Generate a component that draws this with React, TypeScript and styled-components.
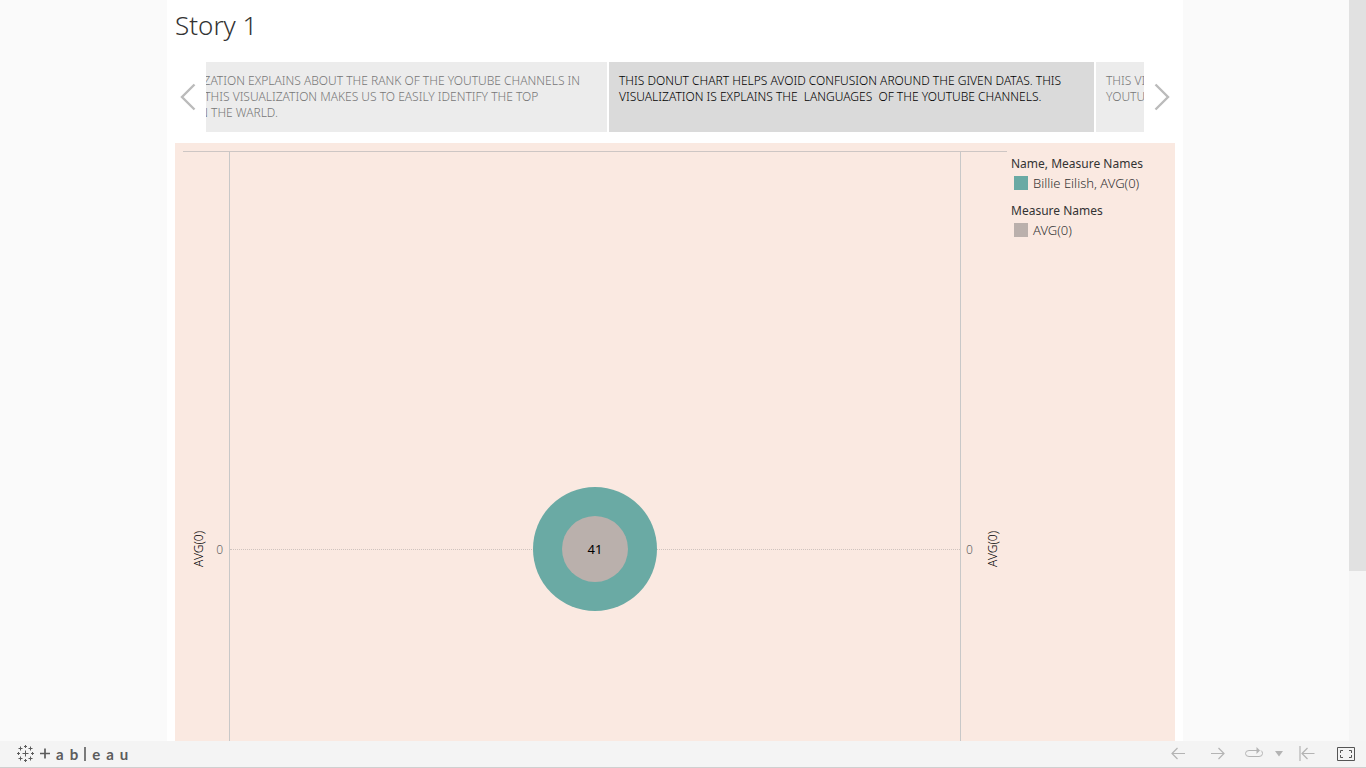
import React from 'react';
import styled, { createGlobalStyle } from 'styled-components';

const GlobalStyle = createGlobalStyle`
  * { box-sizing: border-box; }
  body {
    margin: 0;
    background: #fafafa;
    color: #333;
    font-family: "Noto Sans", "Open Sans", sans-serif;
    font-size: 12px;
  }
  button {
    margin: 0;
    padding: 0;
    border: 0;
    background: none;
    font: inherit;
    color: inherit;
    cursor: pointer;
  }
`;

const Page = styled.div`
  display: flex;
  flex-direction: column;
  height: 100vh;
`;

const Viewport = styled.div`
  display: flex;
  flex: 1;
  min-height: 0;
`;

const Stage = styled.main`
  flex: 1;
  min-width: 0;
  padding-left: 1px;
  overflow: hidden;
`;

const ScrollTrack = styled.div`
  width: 17px;
  background: #f5f5f5;
`;

const ScrollThumb = styled.div`
  height: 77%;
  background: #e1e1e1;
`;

const Story = styled.section`
  max-width: 1016px;
  margin: 0 auto;
  padding: 7px 8px 8px;
  background: #fff;
`;

const Title = styled.h1`
  margin: 0 0 19px;
  font-size: 26px;
  font-weight: 300;
  line-height: 36px;
`;

const Navigator = styled.nav`
  display: flex;
  height: 70px;
  margin-bottom: 11px;
`;

const NavArrow = styled.button<{ $side: 'left' | 'right' }>`
  display: flex;
  flex: none;
  align-items: center;
  justify-content: ${(p) => (p.$side === 'left' ? 'flex-start' : 'flex-end')};
  width: 31px;
  padding: 0 5px;
  color: #bbb;
`;

const PointWindow = styled.div`
  flex: 1;
  min-width: 0;
  overflow: hidden;
`;

const PointStrip = styled.div`
  display: flex;
  gap: 2px;
  height: 100%;
  margin-left: -84px;
`;

const StoryPoint = styled.button<{ $active?: boolean }>`
  display: flex;
  flex: none;
  align-items: flex-start;
  width: 485px;
  padding: 11px 10px;
  background: ${(p) => (p.$active ? '#dadada' : '#ececec')};
  color: ${(p) => (p.$active ? '#000' : '#777')};
  font-weight: 350;
  line-height: 16px;
  text-align: left;
  white-space: pre;
`;

const Dashboard = styled.div`
  display: flex;
  gap: 4px;
  padding: 8px;
  background: #fae9e1;
`;

const Chart = styled.figure`
  display: flex;
  flex: 1;
  height: 795px;
  margin: 0;
  border-top: 1px solid #cdc6c4;
`;

const Axis = styled.div<{ $side: 'left' | 'right' }>`
  display: flex;
  flex-direction: ${(p) => (p.$side === 'left' ? 'row' : 'row-reverse')};
  align-items: center;
  justify-content: space-between;
  width: 46px;
  padding: ${(p) => (p.$side === 'left' ? '0 6px 0 8px' : '0 6px 0 5px')};
`;

const AxisTitle = styled.span`
  color: #000;
  font-weight: 350;
  line-height: 16px;
  writing-mode: vertical-rl;
  rotate: 180deg;
`;

const AxisTick = styled.span`
  color: #666;
  font-weight: 300;
`;

const Plot = styled.div`
  display: grid;
  flex: 1;
  align-items: center;
  justify-items: center;
  border: solid #c8c8c8;
  border-width: 0 1px;

  > * { grid-area: 1 / 1; }
`;

const ZeroLine = styled.div`
  width: 100%;
  border-top: 1px dotted #cfc3be;
`;

const Donut = styled.div`
  display: flex;
  align-items: center;
  justify-content: center;
  width: 124px;
  height: 124px;
  border-radius: 50%;
  background: #6aaaa4;
`;

const DonutHole = styled.div`
  display: flex;
  align-items: center;
  justify-content: center;
  width: 66px;
  height: 66px;
  border-radius: 50%;
  background: #bab0ac;
  color: #000;
  font-size: 13px;
`;

const Legends = styled.aside`
  width: 156px;
  padding-top: 4px;
`;

const LegendBlock = styled.section`
  margin-bottom: 9px;
`;

const LegendTitle = styled.h2`
  margin: 0;
  font-size: 12px;
  font-weight: 400;
  line-height: 18px;
`;

const LegendItem = styled.div`
  display: flex;
  align-items: center;
  gap: 5px;
  padding: 0 3px;
  height: 20px;
  font-size: 13px;
  font-weight: 300;
  line-height: 20px;
`;

const Swatch = styled.span<{ $color: string }>`
  width: 14px;
  height: 14px;
  background: ${(p) => p.$color};
`;

const Toolbar = styled.footer`
  display: flex;
  flex: none;
  justify-content: space-between;
  height: 27px;
  padding-bottom: 1px;
  border-bottom: 1px solid #cfcfcf;
  background: #f4f4f4;
`;

const Brand = styled.a`
  display: flex;
  align-items: center;
  gap: 5px;
  padding-left: 16px;
  color: #5c5c5c;
  text-decoration: none;
`;

const Wordmark = styled.span`
  display: flex;
  align-items: center;
  gap: 6px;
  font-family: Lato, sans-serif;
  font-size: 15px;
  font-weight: 700;
  line-height: 24px;
`;

const Actions = styled.div`
  display: flex;
  color: #b4b4b4;
`;

const Action = styled.button<{ $width: number; $strong?: boolean }>`
  display: flex;
  align-items: center;
  justify-content: center;
  width: ${(p) => p.$width}px;
  color: ${(p) => (p.$strong ? '#555' : 'inherit')};
`;

const Line = styled.svg`
  display: block;
  fill: none;
  stroke: currentColor;
`;

const points = [
  'THIS VISUALIZATION EXPLAINS ABOUT THE RANK OF THE YOUTUBE CHANNELS IN\nTHE WORLD. THIS VISUALIZATION MAKES US TO EASILY IDENTIFY THE TOP\nCHANNELS IN THE WARLD.',
  'THIS DONUT CHART HELPS AVOID CONFUSION AROUND THE GIVEN DATAS. THIS\nVISUALIZATION IS EXPLAINS THE  LANGUAGES  OF THE YOUTUBE CHANNELS.',
  'THIS VISUALIZATION EXPLAINS ABOUT THE\nYOUTUBE CHANNELS.',
];

const legends = [
  { title: 'Name, Measure Names', label: 'Billie Eilish, AVG(0)', color: '#6aaaa4' },
  { title: 'Measure Names', label: 'AVG(0)', color: '#bab0ac' },
];

/* Centre x, centre y and arm length of each plus in the logo mark. */
const pluses: [number, number, number][] = [
  [9.5, 9.5, 3],
  [9.5, 2.5, 1.5], [9.5, 16.5, 1.5], [2.5, 9.5, 1.5], [16.5, 9.5, 1.5],
  [4.5, 4.5, 2], [14.5, 4.5, 2], [4.5, 14.5, 2], [14.5, 14.5, 2],
];

function Mark() {
  return (
    <Line width="19" height="19" viewBox="0 0 19 19" strokeWidth="1" aria-hidden="true">
      {pluses.map(([x, y, r]) => (
        <path key={`${x}-${y}`} d={`M${x - r} ${y}h${r * 2}M${x} ${y - r}v${r * 2}`} />
      ))}
    </Line>
  );
}

export default function App() {
  return (
    <>
      <GlobalStyle />
      <Page>
        <Viewport>
          <Stage>
            <Story>
              <Title>Story 1</Title>
              <Navigator aria-label="Story points">
                <NavArrow $side="left" aria-label="Previous story point">
                  <Line width="16" height="28" viewBox="0 0 16 28" strokeWidth="2.4">
                    <path d="M14.500 1.500L2 14L14.500 26.500" />
                  </Line>
                </NavArrow>
                <PointWindow>
                  <PointStrip>
                    {points.map((text, i) => (
                      <StoryPoint key={i} $active={i === 1}>{text}</StoryPoint>
                    ))}
                  </PointStrip>
                </PointWindow>
                <NavArrow $side="right" aria-label="Next story point">
                  <Line width="16" height="28" viewBox="0 0 16 28" strokeWidth="2.4">
                    <path d="M1.500 1.500L14 14L1.500 26.500" />
                  </Line>
                </NavArrow>
              </Navigator>
              <Dashboard>
                <Chart>
                  <Axis $side="left">
                    <AxisTitle>AVG(0)</AxisTitle>
                    <AxisTick>0</AxisTick>
                  </Axis>
                  <Plot>
                    <ZeroLine />
                    <Donut>
                      <DonutHole>41</DonutHole>
                    </Donut>
                  </Plot>
                  <Axis $side="right">
                    <AxisTitle>AVG(0)</AxisTitle>
                    <AxisTick>0</AxisTick>
                  </Axis>
                </Chart>
                <Legends>
                  {legends.map((l) => (
                    <LegendBlock key={l.title}>
                      <LegendTitle>{l.title}</LegendTitle>
                      <LegendItem>
                        <Swatch $color={l.color} />
                        {l.label}
                      </LegendItem>
                    </LegendBlock>
                  ))}
                </Legends>
              </Dashboard>
            </Story>
          </Stage>
          <ScrollTrack>
            <ScrollThumb />
          </ScrollTrack>
        </Viewport>
        <Toolbar>
          <Brand href="#" aria-label="tableau">
            <Mark />
            <Wordmark>
              <Line width="10" height="11" viewBox="0 0 10 11" strokeWidth="1.7">
                <path d="M0 5.500h10M5 .5v10" />
              </Line>
              <span>a</span>
              <span>b</span>
              <Line width="2" height="14" viewBox="0 0 2 14" strokeWidth="1.6">
                <path d="M1 0v14" />
              </Line>
              <span>e</span>
              <span>a</span>
              <span>u</span>
            </Wordmark>
          </Brand>
          <Actions>
            <Action $width={40} aria-label="Undo">
              <Line width="14" height="13" viewBox="0 0 14 13" strokeWidth="1.2">
                <path d="M14 6.500H1M6.500 1L1 6.500L6.500 12" />
              </Line>
            </Action>
            <Action $width={40} aria-label="Redo">
              <Line width="14" height="13" viewBox="0 0 14 13" strokeWidth="1.2">
                <path d="M0 6.500H13M7.500 1L13 6.500L7.500 12" />
              </Line>
            </Action>
            <Action $width={32} aria-label="Replay animation">
              <Line width="18" height="13" viewBox="0 0 18 13">
                <path d="M12 3.500H4Q.5 3.500 .5 6.500T4 9.500H14Q17.500 9.500 17.500 6.500Q17.500 4.500 16 3.500" />
                <path d="M11.500 0L15 3.500L11.500 7Z" fill="currentColor" stroke="none" />
              </Line>
            </Action>
            <Action $width={18} aria-label="Replay speed">
              <Line width="8" height="7" viewBox="0 0 8 7">
                <path d="M0 1H8L4 6.500Z" fill="currentColor" stroke="none" />
              </Line>
            </Action>
            <Action $width={38} aria-label="Revert">
              <Line width="16" height="15" viewBox="0 0 16 15" strokeWidth="1.2">
                <path d="M1 0V15M15.500 7.500H3M8.500 2L3 7.500L8.500 13" />
              </Line>
            </Action>
            <Action $width={40} $strong aria-label="Full screen">
              <Line width="18" height="14" viewBox="0 0 18 14">
                <path d="M.5 .5H17.500V13.500H.5ZM3.500 6V3.500H6M12 3.500H14.500V6M14.500 8V10.500H12M6 10.500H3.500V8" />
              </Line>
            </Action>
          </Actions>
        </Toolbar>
      </Page>
    </>
  );
}
